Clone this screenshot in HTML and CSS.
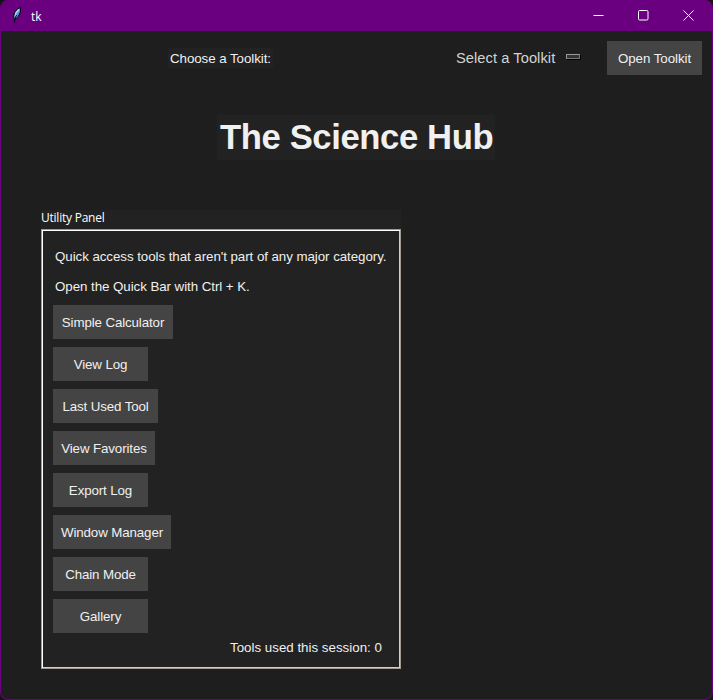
FILE: index.html
```html
<!DOCTYPE html>
<html lang="en">
<head>
<meta charset="utf-8">
<title>tk</title>
<link rel="stylesheet" href="styles.css">
</head>
<body>
<div class="window">
  <header class="titlebar">
    <svg class="feather" width="10" height="16" viewBox="0 0 10 16"><path d="M8.500.6 5.500 1.800 2.500 5.500 1.600 10.500 3 12.500 6.300 9.500 8.400 5Z" fill="#5596dc" stroke="#050510"/><path d="M7 2.500 4.200 5.500 3 9.500" fill="none" stroke="#b9dcfa" stroke-width="1.200"/><path d="M4.500 8 2.700 12.500 2.500 15.500" fill="none" stroke="#05050d"/></svg>
    <span class="caption">tk</span>
    <div class="controls">
      <svg width="11" height="11" viewBox="0 0 11 11"><path d="M.5 5.500h10"/></svg>
      <svg width="11" height="11" viewBox="0 0 11 11"><rect x=".5" y=".5" width="9.500" height="9.500" rx="1.200"/></svg>
      <svg width="11" height="11" viewBox="0 0 11 11"><path d="M.5.5l10 10M10.500.5l-10 10"/></svg>
    </div>
  </header>
  <main class="content">
    <div class="toolbar">
      <label class="choose">Choose a Toolkit:</label>
      <div class="select"><span class="value">Select a Toolkit</span><i class="indicator"></i></div>
      <button class="btn open">Open Toolkit</button>
    </div>
    <h1 class="heading">The Science Hub</h1>
    <section class="panel">
      <div class="legend">Utility Panel</div>
      <div class="frame">
        <p class="quick">Quick access tools that aren't part of any major category.</p>
        <p class="hint">Open the Quick Bar with Ctrl + K.</p>
        <div class="buttons">
          <button class="btn w120">Simple Calculator</button>
          <button class="btn">View Log</button>
          <button class="btn w105">Last Used Tool</button>
          <button class="btn w102">View Favorites</button>
          <button class="btn">Export Log</button>
          <button class="btn w118">Window Manager</button>
          <button class="btn">Chain Mode</button>
          <button class="btn">Gallery</button>
        </div>
        <p class="count">Tools used this session: 0</p>
      </div>
    </section>
  </main>
</div>
</body>
</html>
```
FILE: styles.css
```css
* { box-sizing: border-box; }
html, body { margin: 0; height: 100%; background: #141414; overflow: hidden; }
body { font-family: "Liberation Sans", Arial, sans-serif; font-size: 13.33px; color: #f0f0f0; }
p, h1 { margin: 0; }
.window { width: 713px; height: 700px; display: flex; flex-direction: column; background: #1e1e1e; border: 1px solid #6a007f; border-top: 0; border-radius: 8px; overflow: hidden; white-space: nowrap; }
.titlebar { height: 31px; flex: none; background: #6a007f; display: flex; align-items: center; padding-left: 11px; }
.feather { margin-top: -1px; }
.caption { margin: 1px 0 0 9px; font: 12px "Open Sans", sans-serif; color: #fff; }
.controls { margin-left: auto; display: flex; gap: 34px; padding-right: 18px; }
.controls svg { fill: none; stroke: #fff; stroke-width: 1; }
.content { flex: 1; padding: 10px 10px 0 40px; }
.toolbar { height: 34px; display: flex; align-items: center; }
.choose { margin-left: 127px; width: 105px; height: 20px; line-height: 22px; padding-left: 2px; background: #222; letter-spacing: -.06px; }
.select { margin-left: 183px; display: flex; align-items: center; font-size: 14.67px; letter-spacing: .06px; color: #d3d3d3; }
.value { width: 99px; }
.indicator { width: 14px; height: 5px; margin: -3px 0 0 11px; border: 1px solid #999; border-right-color: #777; border-bottom-color: #777; background: #333; box-shadow: 1px 1px #000; }
.btn { width: 95px; height: 34px; border: 0; padding: 1px 0 0; background: #444; color: #f0f0f0; font: inherit; letter-spacing: -.12px; text-align: center; white-space: nowrap; }
.open { margin-left: auto; letter-spacing: -.06px; }
.heading { width: 278px; height: 45px; margin: 40px 0 0 176px; padding-left: 3px; background: #222; font-size: 34.67px; font-weight: bold; line-height: 45px; letter-spacing: -.4px; }
.panel { width: 360px; height: 459px; margin-top: 50px; background: #222; }
.legend { height: 19px; font: 12px/16px "Open Sans", sans-serif; letter-spacing: -.23px; color: #fff; }
.frame { height: 440px; border: 1px solid #a09a90; box-shadow: inset 1px 1px #fff, inset -1px -1px #d4d0c8; padding: 17px 11px 0; display: flex; flex-direction: column; }
.frame p { height: 20px; line-height: 20px; flex: none; letter-spacing: -.06px; }
.quick, .hint { padding-left: 2px; }
.frame .hint { margin-top: 10px; }
.buttons { margin-top: 8px; display: flex; flex-direction: column; gap: 8px; }
.w120 { width: 120px; }
.w118 { width: 118px; }
.w105 { width: 105px; }
.w102 { width: 102px; }
.frame .count { margin: 5px 0 0 177px; letter-spacing: 0; }
```
